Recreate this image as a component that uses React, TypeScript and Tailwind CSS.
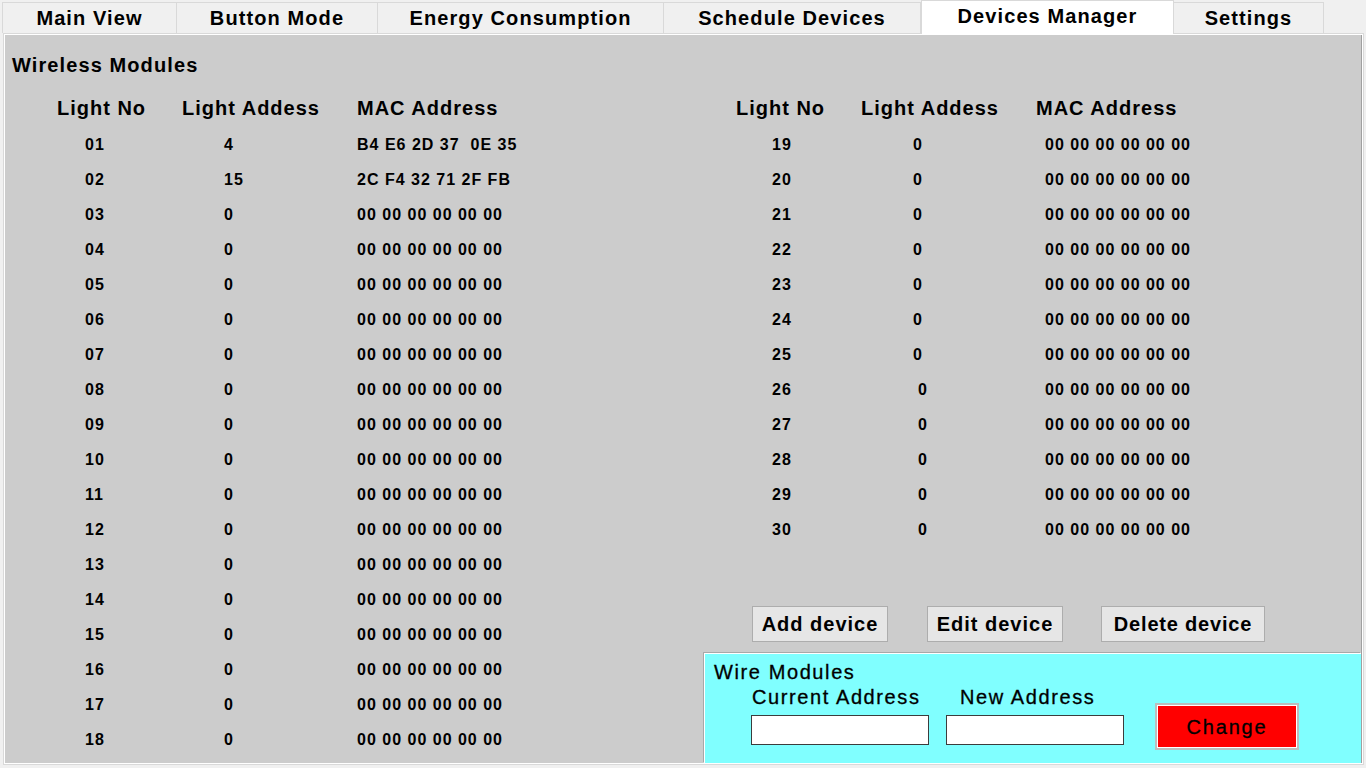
import React from "react";

const tabs = [
  { label: "Main View", w: "w-[175px]" },
  { label: "Button Mode", w: "w-[201px]" },
  { label: "Energy Consumption", w: "w-[286px]" },
  { label: "Schedule Devices", w: "w-[257px]" },
  { label: "Devices Manager", w: "w-[253px]", active: true },
  { label: "Settings", w: "w-[150px]" },
];

const ZERO_MAC = "00 00 00 00 00 00";

const leftRows = Array.from({ length: 18 }, (_, i) => {
  const no = String(i + 1).padStart(2, "0");
  if (i === 0) return { no, addr: "4", mac: "B4 E6 2D 37  0E 35" };
  if (i === 1) return { no, addr: "15", mac: "2C F4 32 71 2F FB" };
  return { no, addr: "0", mac: ZERO_MAC };
});

const rightRows = Array.from({ length: 12 }, (_, i) => ({
  no: String(i + 19),
  addr: "0",
  mac: ZERO_MAC,
  shift: i + 19 >= 26,
}));

export default function App() {
  return (
    <div
      className="w-[1366px] h-[768px] bg-[#f0f0f0] overflow-hidden text-black"
      style={{ fontFamily: '"Liberation Sans", Arial, sans-serif' }}
    >
      {/* tab strip */}
      <div className="flex h-[33px] pl-[2px] items-end">
        {tabs.map((t, i) =>
          t.active ? (
            <div
              key={t.label}
              className={`${t.w} h-[34px] -mb-px relative z-10 bg-white border border-b-0 border-[#d9d9d9] flex items-center justify-center text-[20px] font-bold tracking-[1.1px] pb-[3px]`}
            >
              {t.label}
            </div>
          ) : (
            <div
              key={t.label}
              className={`${t.w} h-[31px] bg-[#f0f0f0] border-t border-r ${i === 0 ? "border-l" : ""} border-[#d9d9d9] flex items-center justify-center text-[20px] font-bold tracking-[1.1px]`}
            >
              {t.label}
            </div>
          )
        )}
      </div>

      {/* page panel */}
      <div className="ml-[3px] w-[1361px] h-[732px] border border-[#d9d9d9] bg-white p-px">
        <div className="h-full bg-[#cccccc] flex border-r border-[#a0a0a0]">
          {/* wireless modules left list */}
          <div className="w-[699px] pt-[18px]">
            <div className="pl-[7px] h-[24px] leading-[24px] text-[20px] font-bold tracking-[1.1px]">
              Wireless Modules
            </div>
            <div className="mt-[14px]">
              <div className="flex h-[35px] pb-[2px] items-center text-[20px] font-bold tracking-[1px]">
                <div className="w-[177px] pl-[52px]">Light No</div>
                <div className="w-[175px]">Light Addess</div>
                <div>MAC Address</div>
              </div>
              {leftRows.map((r) => (
                <div
                  key={r.no}
                  className="flex h-[35px] pt-[2px] items-center text-[16px] font-bold tracking-[1px]"
                >
                  <div className="w-[177px] pl-[80px]">{r.no}</div>
                  <div className="w-[175px] pl-[42px]">{r.addr}</div>
                  <div className="whitespace-pre">{r.mac}</div>
                </div>
              ))}
            </div>
          </div>

          {/* right side */}
          <div className="flex-1 flex flex-col">
            <div className="pt-[56px]">
              <div className="flex h-[35px] pb-[2px] items-center text-[20px] font-bold tracking-[1px]">
                <div className="w-[157px] pl-[32px]">Light No</div>
                <div className="w-[175px]">Light Addess</div>
                <div>MAC Address</div>
              </div>
              {rightRows.map((r) => (
                <div
                  key={r.no}
                  className="flex h-[35px] pt-[2px] items-center text-[16px] font-bold tracking-[1px]"
                >
                  <div className="w-[157px] pl-[68px]">{r.no}</div>
                  <div className={`w-[175px] ${r.shift ? "pl-[57px]" : "pl-[52px]"}`}>
                    {r.addr}
                  </div>
                  <div className="pl-[9px]">{r.mac}</div>
                </div>
              ))}
            </div>

            <div className="flex mt-auto pl-[48px]">
              <button className="w-[136px] h-[36px] bg-[#e6e6e6] border border-[#adadad] text-[20px] font-bold tracking-[1px]">
                Add device
              </button>
              <button className="ml-[39px] w-[136px] h-[36px] bg-[#e6e6e6] border border-[#adadad] text-[20px] font-bold tracking-[1px]">
                Edit device
              </button>
              <button className="ml-[38px] w-[164px] h-[36px] bg-[#e6e6e6] border border-[#adadad] text-[20px] font-bold tracking-[0.8px]">
                Delete device
              </button>
            </div>

            {/* wire modules */}
            <div className="mt-[11px] h-[110px] bg-[#80ffff] border-t border-l border-white shadow-[-1px_-1px_0_#a8a8a8] pl-[9px] pt-[7px]">
              <div className="h-[22px] leading-[22px] text-[20px] tracking-[1.6px] [-webkit-text-stroke:0.3px_black]">
                Wire Modules
              </div>
              <div className="flex mt-[3px]">
                <div className="ml-[37px] flex flex-col">
                  <div className="h-[22px] leading-[22px] pl-px text-[20px] tracking-[1.6px] [-webkit-text-stroke:0.3px_black]">
                    Current Address
                  </div>
                  <input className="mt-[7px] w-[178px] h-[30px] bg-white border border-[#3c3c3c] outline-none" />
                </div>
                <div className="ml-[17px] flex flex-col">
                  <div className="h-[22px] leading-[22px] pl-[14px] text-[20px] tracking-[1.6px] [-webkit-text-stroke:0.3px_black]">
                    New Address
                  </div>
                  <input className="mt-[7px] w-[178px] h-[30px] bg-white border border-[#3c3c3c] outline-none" />
                </div>
                <div className="ml-[31px] mt-[17px] w-[144px] h-[47px] border-2 border-[#bdbdbd] bg-white p-px">
                  <button className="w-full h-full bg-[#ff0000] text-[20px] tracking-[1.8px] [-webkit-text-stroke:0.3px_black]">
                    Change
                  </button>
                </div>
              </div>
            </div>
          </div>
        </div>
      </div>
    </div>
  );
}
